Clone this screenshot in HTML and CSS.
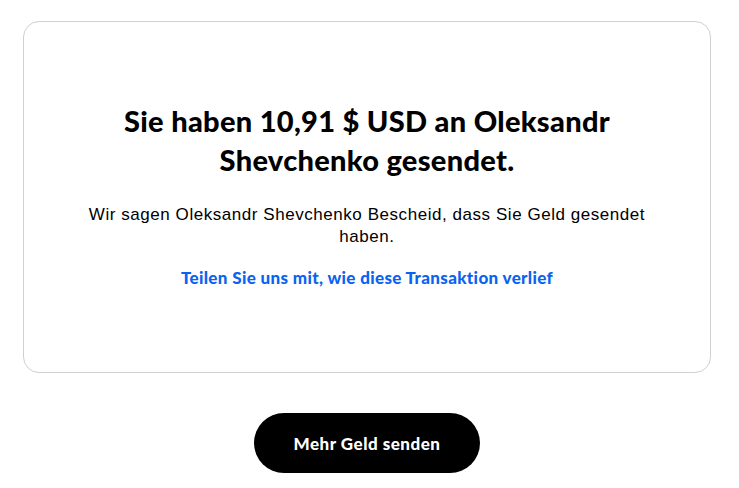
FILE: index.html
```html
<!DOCTYPE html>
<html lang="de">
<head>
    <meta charset="UTF-8">
    <meta name="viewport" content="width=device-width, initial-scale=1.0">
    <title>Geld gesendet</title>
    <link rel="stylesheet" href="styles.css">
</head>
<body>
    <div class="page">
        <div class="card">
            <h1 class="title">Sie haben 10,91 $ USD an Oleksandr Shevchenko gesendet.</h1>
            <p class="info">Wir sagen Oleksandr Shevchenko Bescheid, dass Sie Geld gesendet haben.</p>
            <a class="feedback" href="#">Teilen Sie uns mit, wie diese Transaktion verlief</a>
        </div>
        <div class="actions">
            <button class="send-more" type="button">Mehr Geld senden</button>
        </div>
    </div>
</body>
</html>
```

FILE: styles.css
```css
body {
    margin: 0;
    background: #fff;
    font-family: "Liberation Sans", Arial, sans-serif;
    color: #000;
}
.page {
    padding: 21px 28px 0 23px;
}
.card {
    box-sizing: border-box;
    height: 352px;
    border: 1px solid #d0d0d0;
    border-radius: 16px;
    padding: 79px 44px 0;
    text-align: center;
}
.title {
    margin: 0;
    font-family: Lato, "Open Sans", sans-serif;
    font-weight: 900;
    font-size: 29px;
    line-height: 39px;
    letter-spacing: 0.3px;
}
.info {
    margin: 25px 0 0;
    font-size: 17px;
    line-height: 22px;
    letter-spacing: 0.55px;
}
.feedback {
    display: block;
    margin-top: 19px;
    font-family: Lato, "Open Sans", sans-serif;
    font-weight: 900;
    font-size: 17px;
    letter-spacing: 0.35px;
    color: #0a63f0;
    text-decoration: none;
}
.actions {
    display: flex;
    justify-content: center;
    margin-top: 40px;
}
.send-more {
    width: 226px;
    height: 60px;
    border: none;
    border-radius: 30px;
    background: #000;
    color: #fff;
    font-family: Lato, "Open Sans", sans-serif;
    font-weight: 900;
    font-size: 17px;
    letter-spacing: 0.5px;
    cursor: pointer;
}
```
